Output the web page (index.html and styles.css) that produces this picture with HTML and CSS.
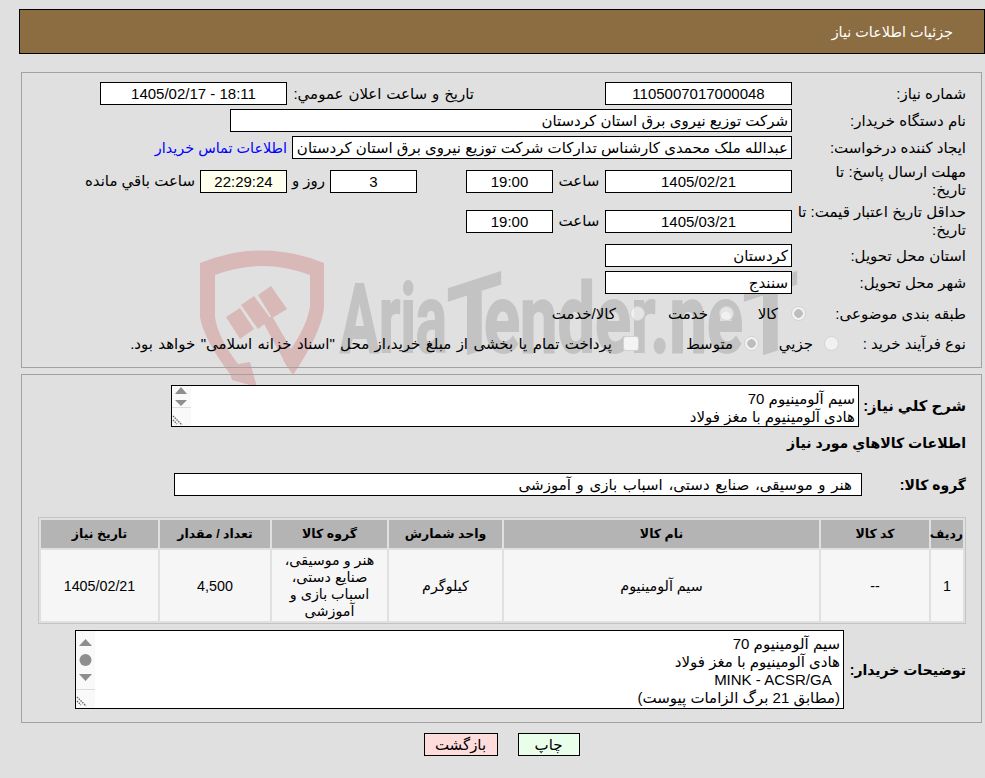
FILE: index.html
```html
<!DOCTYPE html>
<html lang="fa" dir="rtl">
<head>
<meta charset="utf-8">
<title>جزئیات اطلاعات نیاز</title>
<link rel="stylesheet" href="styles.css">
</head>
<body>
<div class="page">
  <svg class="wm" width="985" height="400" viewBox="0 0 985 400" aria-hidden="true">
    <g fill="#d9b8b8">
      <path d="M200 263 Q262 238 324 263 L324 307 Q322 332 293 375 L283 360 Q306 330 310 307 L310 275 Q262 257 215 275 L215 317 Q218 338 238 364 L250 362 L257 387 L232 380 L230 374 Q204 340 200 317 Z"/>
      <path d="M226 317 L240 308 L254 329 L240 339 Z"/>
      <path d="M241 305 L254 296 L271 319 L258 329 Z"/>
      <path d="M258 295 L271 286 L287 309 L272 318 Z"/>
      <path d="M263 322 L272 316 L298 361 L288 368 Z"/>
    </g>
    <g class="wm-text">
      <text x="340" y="352" font-size="97" textLength="107" lengthAdjust="spacingAndGlyphs">Aria</text>
      <text x="447" y="352" font-size="100" textLength="55" lengthAdjust="spacingAndGlyphs" transform="translate(474 352) skewY(-18) translate(-474 -352)">T</text>
      <text x="484" y="352" font-size="97" textLength="259" lengthAdjust="spacingAndGlyphs">ender.ne</text>
      <text x="743" y="352" font-size="100" textLength="55" lengthAdjust="spacingAndGlyphs" transform="translate(770 352) skewY(-18) translate(-770 -352)">T</text>
    </g>
  </svg>
  <div class="content">
    <header class="head"><span>جزئیات اطلاعات نیاز</span></header>

    <section class="panel panel-top">
      <div class="row">
        <div class="lbl">شماره نیاز:</div>
        <div class="box w187 c">1105007017000048</div>
        <div class="lbl-announce">تاریخ و ساعت اعلان عمومي:</div>
        <div class="box w187 c" dir="ltr">1405/02/17 - 18:11</div>
      </div>
      <div class="row">
        <div class="lbl">نام دستگاه خریدار:</div>
        <div class="box w562">شرکت توزیع نیروی برق استان کردستان</div>
      </div>
      <div class="row">
        <div class="lbl">ایجاد کننده درخواست:</div>
        <div class="box w500">عبدالله ملک محمدی کارشناس تدارکات شرکت توزیع نیروی برق استان کردستان</div>
        <a class="link" href="#">اطلاعات تماس خریدار</a>
      </div>
      <div class="row row-tall">
        <div class="lbl lbl-narrow">مهلت ارسال پاسخ: تا تاریخ:</div>
        <div class="box w187 c">1405/02/21</div>
        <div class="time-lbl">ساعت</div>
        <div class="box w87 c">19:00</div>
        <div class="box w87 c days">3</div>
        <div class="days-lbl">روز و</div>
        <div class="box w87 c remain">22:29:24</div>
        <div class="remain-lbl">ساعت باقي مانده</div>
      </div>
      <div class="row row-tall">
        <div class="lbl">حداقل تاریخ اعتبار قیمت: تا تاریخ:</div>
        <div class="box w187 c">1405/03/21</div>
        <div class="time-lbl">ساعت</div>
        <div class="box w87 c">19:00</div>
      </div>
      <div class="row row-after-tall">
        <div class="lbl">استان محل تحویل:</div>
        <div class="box w187">کردستان</div>
      </div>
      <div class="row">
        <div class="lbl">شهر محل تحویل:</div>
        <div class="box w187">سنندج</div>
      </div>
      <div class="row row-opt row-opt-first">
        <div class="lbl">طبقه بندی موضوعی:</div>
        <div class="opts opts-a">
          <span class="radio on"></span><span class="opt o1">کالا</span>
          <span class="radio"></span><span class="opt o2">خدمت</span>
          <span class="radio"></span><span class="opt o3">کالا/خدمت</span>
        </div>
      </div>
      <div class="row row-opt">
        <div class="lbl">نوع فرآیند خرید :</div>
        <div class="opts opts-b">
          <span class="radio"></span><span class="opt o4">جزیي</span>
          <span class="radio on"></span><span class="opt o5">متوسط</span>
          <span class="check"></span><span class="opt o6">پرداخت تمام یا بخشی از مبلغ خرید،از محل "اسناد خزانه اسلامی" خواهد بود.</span>
        </div>
      </div>
    </section>

    <section class="panel panel-main">
      <div class="bold-row desc-row">
        <div class="blbl blbl-desc">شرح کلي نیاز:</div>
        <div class="area area-a">
          <div class="area-text">سیم آلومینیوم 70<br>هادی آلومینیوم با مغز فولاد</div>
          <svg class="sb" width="19" height="40" viewBox="0 0 19 40" aria-hidden="true">
            <rect width="19" height="40" fill="#f9f9f9"/>
            <path d="M9 1 L15 8 L3 8 Z M3 14 L15 14 L9 20 Z" fill="#8e8e8e"/>
            <path d="M0 21.5 H19" stroke="#dcdcdc"/>
            <path d="M1 30 L10 39 M1 34 L5 38" stroke="#666" stroke-width="1.4" stroke-dasharray="1.5 1"/>
          </svg>
        </div>
      </div>
      <div class="section-title">اطلاعات کالاهاي مورد نیاز</div>
      <div class="bold-row group-row">
        <div class="blbl blbl-group">گروه کالا:</div>
        <div class="box w688 group-box">هنر و موسیقی، صنایع دستی، اسباب بازی و آموزشی</div>
      </div>
      <table class="items">
        <colgroup>
          <col class="c1"><col class="c2"><col class="c3"><col class="c4"><col class="c5"><col class="c6"><col class="c7">
        </colgroup>
        <thead>
          <tr>
            <th>ردیف</th><th>کد کالا</th><th>نام کالا</th><th>واحد شمارش</th><th>گروه کالا</th><th>تعداد / مقدار</th><th>تاریخ نیاز</th>
          </tr>
        </thead>
        <tbody>
          <tr>
            <td>1</td><td>--</td><td>سیم آلومینیوم</td><td>کیلوگرم</td>
            <td class="group-cell">هنر و موسیقی، صنایع دستی، اسباب بازی و آموزشی</td>
            <td>4,500</td><td>1405/02/21</td>
          </tr>
        </tbody>
      </table>
      <div class="bold-row buyer-row">
        <div class="blbl">توضیحات خریدار:</div>
        <div class="area area-b">
          <div class="area-text">سیم آلومینیوم 70<br>هادی آلومینیوم با مغز فولاد<br>&nbsp;&nbsp;MINK - ACSR/GA<br>(مطابق 21 برگ الزامات پیوست)</div>
          <svg class="sb" width="19" height="77" viewBox="0 0 19 77" aria-hidden="true">
            <rect width="19" height="77" fill="#f9f9f9"/>
            <path d="M9.5 8 L16 15 L3 15 Z M3 43 L16 43 L9.5 50 Z" fill="#8e8e8e"/>
            <circle cx="9.5" cy="29" r="6" fill="#8e8e8e"/>
            <path d="M0 58.5 H19" stroke="#dcdcdc"/>
            <path d="M1 66 L10 75 M1 70 L5 74" stroke="#666" stroke-width="1.4" stroke-dasharray="1.5 1"/>
          </svg>
        </div>
      </div>
    </section>

    <div class="actions">
      <button class="btn btn-print" type="button">چاپ</button>
      <button class="btn btn-back" type="button">بازگشت</button>
    </div>
  </div>
</div>
</body>
</html>
```

FILE: styles.css
```css
* { box-sizing: border-box; }
html, body { margin: 0; padding: 0; }
body {
  background: #e0e0e0;
  color: #000;
  font: 15px/18px "Liberation Sans", "DejaVu Sans", sans-serif;
  direction: rtl;
  width: 985px;
  height: 778px;
  overflow: hidden;
}
.page { position: relative; height: 778px; }
.wm { position: absolute; left: 0; top: 0; z-index: 0; direction: ltr; }
.wm-text text {
  font-family: Roboto, "Liberation Sans", sans-serif;
  font-weight: 700;
  fill: #c3c3c3;
  stroke: #c3c3c3;
  stroke-width: 2px;
}
.content { position: relative; z-index: 1; padding-top: 9px; }

.head {
  height: 45px;
  width: 966px;
  background: #8c6d42;
  border: 1px solid #000;
  color: #fff;
  display: flex;
  align-items: center;
  padding-right: 31px;
  font-size: 14.4px;
}

.panel {
  width: 961px;
  margin-right: 3px;
  border: 1px solid #a2a2a2;
  padding-right: 15px;
}
.panel-top { margin-top: 18px; height: 296px; padding-top: 9px; }
.panel-main { margin-top: 6px; height: 349px; padding-top: 10px; }

.row { display: flex; align-items: center; min-height: 23px; margin-top: 4px; }
.row:first-child { margin-top: 0; }
.row-tall { min-height: 36px; }
.row-after-tall { margin-top: 5px; }
.row-opt { margin-top: 7px; }
.row-opt-first { margin-top: 8px; }
.lbl { width: 174px; padding-left: 2px; flex: none; }
.lbl-narrow { padding-left: 10px; }

.box {
  height: 23px;
  border: 1px solid #000;
  background: #fff;
  padding: 0 3px;
  line-height: 21px;
  white-space: nowrap;
  overflow: hidden;
  flex: none;
}
.c { text-align: center; }
.w187 { width: 187px; }
.w87 { width: 87px; }
.w500 { width: 500px; }
.w562 { width: 562px; }
.w688 { width: 688px; }

.lbl-announce { width: 187px; margin-right: 131px; padding-left: 6px; white-space: nowrap; flex: none; word-spacing: .7px; }
.link { color: #0000ff; text-decoration: none; margin-right: 5px; white-space: nowrap; font-size: 14.4px; }
.time-lbl { width: 52px; text-align: center; flex: none; }
.days { margin-right: 49px; }
.days-lbl { width: 43px; text-align: center; flex: none; }
.remain { background: #ffffee; }
.remain-lbl { margin-right: 5px; white-space: nowrap; }

.opts { display: flex; align-items: center; white-space: nowrap; }
.opts-a { margin-right: -14px; }
.opts-b { margin-right: -47px; }
.radio, .check {
  flex: none;
  width: 15px;
  height: 15px;
  border-radius: 50%;
  background: rgba(255,255,255,.55);
  border: 1px solid #d2d2d2;
}
.check { width: 16px; border-radius: 3px; background: #f4f4f4; }
.radio.on { background: radial-gradient(circle, #bdbdbd 0 4px, #f2f2f2 4.5px); }
.opt { display: block; flex: none; }
.o1 { margin-right: 13px; width: 44px; }
.o2 { margin-right: 11px; width: 63px; }
.o3 { margin-right: 14px; }
.o4 { margin-right: 11px; width: 54px; }
.o5 { margin-right: 11px; width: 94px; }
.o6 { margin-right: 11px; word-spacing: 1.2px; }

.bold-row { display: flex; align-items: center; }
.blbl { font-weight: 700; font-size: 14px; width: 107px; flex: none; white-space: nowrap; }
.blbl-desc { font-size: 14.8px; }
.blbl-group { width: 104px; }
.section-title { font-weight: 700; font-size: 14.1px; margin-top: 7px; }
.group-row { margin-top: 21px; }
.group-box { padding-right: 9px; word-spacing: 1.5px; }

.area {
  display: flex;
  border: 1px solid #000;
  background: #fff;
  overflow: hidden;
  flex: none;
}
.area-a { width: 688px; height: 42px; }
.area-b { width: 769px; height: 79px; margin-right: 15px; }
.area-text { flex: 1; padding: 4px 3px 0 0; white-space: nowrap; }
.sb { display: block; flex: none; }

.items {
  width: 928px;
  margin-top: 21px;
  border: 1px solid #c4c4c4;
  border-collapse: separate;
  border-spacing: 2px;
  table-layout: fixed;
}
.c1 { width: 32px; } .c2 { width: 108px; } .c3 { width: 315px; } .c4 { width: 113px; }
.c5 { width: 115px; } .c6 { width: 110px; } .c7 { width: 117px; }
.items th { background: #b4b4b4; height: 28px; padding: 0; font-size: 12.5px; font-weight: 700; text-align: center; white-space: nowrap; }
.items td { background: #f6f6f6; height: 71px; padding: 1px 3px; text-align: center; font-size: 14.3px; }
.items .group-cell { line-height: 17px; padding: 1px 8px; }
.buyer-row { margin-top: 6px; }

.actions { display: flex; justify-content: center; gap: 20px; margin-top: 10px; padding-left: 18px; }
.btn {
  height: 23px;
  border: 1px solid #000;
  padding: 0;
  font: inherit;
  color: #000;
}
.btn-print { width: 62px; background: #eaffea; }
.btn-back { width: 74px; background: #ffdcdc; }
```
